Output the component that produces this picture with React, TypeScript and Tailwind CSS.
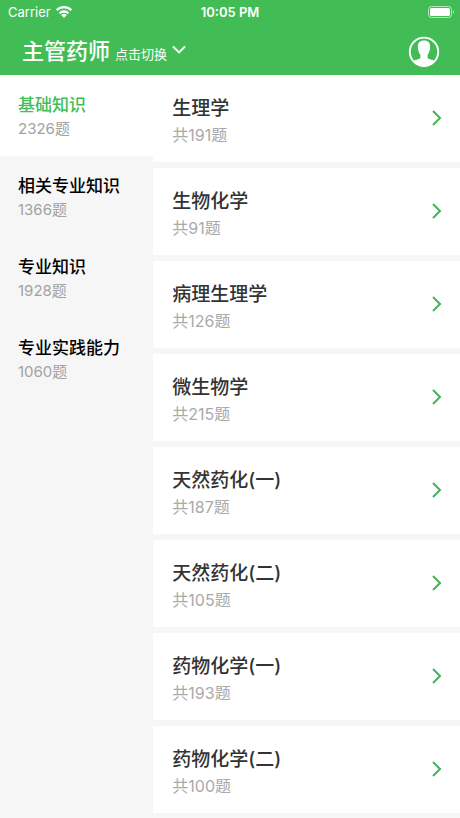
import { useState } from 'react';

interface Subject {
  name: string;
  count: number;
}

const subjects: Subject[] = [
  { name: '基础知识', count: 2326 },
  { name: '相关专业知识', count: 1366 },
  { name: '专业知识', count: 1928 },
  { name: '专业实践能力', count: 1060 },
];

const chapters: Subject[] = [
  { name: '生理学', count: 191 },
  { name: '生物化学', count: 91 },
  { name: '病理生理学', count: 126 },
  { name: '微生物学', count: 215 },
  { name: '天然药化(一)', count: 187 },
  { name: '天然药化(二)', count: 105 },
  { name: '药物化学(一)', count: 193 },
  { name: '药物化学(二)', count: 100 },
];

const StatusBar: React.FC = () => (
  <div className="grid h-6 grid-cols-3 items-center px-1 leading-6">
    <div className="flex items-center gap-1 pl-1 text-[13px]">
      <span>Carrier</span>
      <svg className="mb-0.5 h-[13px] w-[18px]" viewBox="0 0 18 13" fill="none" stroke="currentColor" strokeWidth="2.4">
        <path d="M1.6 5.1a10.6 10.6 0 0 1 14.8 0" />
        <path d="M4.6 8.3a6.3 6.3 0 0 1 8.8 0" />
        <path d="M9 12.7 6.3 10.2a3.8 3.8 0 0 1 5.4 0z" fill="currentColor" stroke="none" />
      </svg>
    </div>
    <span className="text-center text-[13px] font-semibold">10:05 PM</span>
    <svg className="h-3 w-7 justify-self-end" viewBox="0 0 28 12" fill="none">
      <rect x="0.5" y="0.5" width="23" height="11" rx="3" stroke="currentColor" opacity="0.6" />
      <rect x="2" y="2" width="20" height="8" rx="1.6" fill="currentColor" />
      <path d="M25 4.2c1.6.5 1.6 3.1 0 3.6z" fill="currentColor" opacity="0.6" />
    </svg>
  </div>
);

const Header: React.FC = () => (
  <header className="bg-[#42bd56] text-white">
    <StatusBar />
    <div className="flex h-[51px] items-center justify-between pl-[22px] pr-5 pt-0.5">
      <button className="flex items-center gap-1">
        <span className="flex items-baseline gap-[5px]">
          <span className="text-[22px] font-medium leading-8">主管药师</span>
          <span className="text-[13px]">点击切换</span>
        </span>
        <svg className="h-4 w-4" viewBox="0 0 16 16" fill="none" stroke="currentColor" strokeWidth="1.9">
          <path d="M2 3.500l6 6 6-6" />
        </svg>
      </button>
      <button aria-label="个人中心">
        <svg className="h-8 w-8" viewBox="0 0 32 32" fill="none">
          <circle cx="16" cy="16.8" r="14.2" stroke="currentColor" strokeWidth="1.9" />
          <path
            d="M16 5.5c4.300 0 6.300 2.400 6.100 6.500-.1 3.900-1.300 6.300-2.500 7.700v3.400c1.300 1.700 4.500 1.500 7.100 2.800A14 14 0 0 1 16 31 14 14 0 0 1 5.300 25.900c2.600-1.300 5.800-1.100 7.100-2.800v-3.400c-1.200-1.400-2.400-3.800-2.500-7.700C9.700 7.900 11.700 5.500 16 5.500z"
            fill="currentColor"
          />
        </svg>
      </button>
    </div>
  </header>
);

const App: React.FC = () => {
  const [active, setActive] = useState(0);

  return (
    <div className="min-h-screen bg-[#f6f6f6] font-['Inter','Noto_Sans_CJK_SC',sans-serif]">
      <Header />
      <div className="flex">
        {/* Subjects */}
        <nav className="w-1/3">
          {subjects.map((subject, index) => (
            <button
              key={subject.name}
              className={
                index === active
                  ? 'block w-full bg-white pb-[15px] pl-[18px] pt-[18px] text-left text-[#42bd56]'
                  : 'block w-full pb-[15px] pl-[18px] pt-[18px] text-left text-black'
              }
              onClick={() => setActive(index)}
            >
              <span className="block text-[17px] font-medium leading-6">{subject.name}</span>
              <span className="block text-[15px] leading-6 text-[#a2a2a2]">{subject.count}题</span>
            </button>
          ))}
        </nav>

        {/* Chapters of the selected subject */}
        <ul className="flex flex-1 flex-col gap-1.5">
          {chapters.map((chapter) => (
            <li key={chapter.name} className="bg-white">
              <button className="flex w-full items-center justify-between pb-0.5 pl-[19px] pr-4 text-left">
                <span className="pb-[13px] pt-5">
                  <span className="block text-[19px] font-medium leading-7 text-[#333]">{chapter.name}</span>
                  <span className="block text-[16px] leading-6 text-[#aaa]">共{chapter.count}题</span>
                </span>
                <svg className="h-4 w-4 text-[#42b35a]" viewBox="0 0 16 16" fill="none" stroke="currentColor" strokeWidth="2">
                  <path d="M5 1l7 7-7 7" />
                </svg>
              </button>
            </li>
          ))}
        </ul>
      </div>
    </div>
  );
};

export default App;
